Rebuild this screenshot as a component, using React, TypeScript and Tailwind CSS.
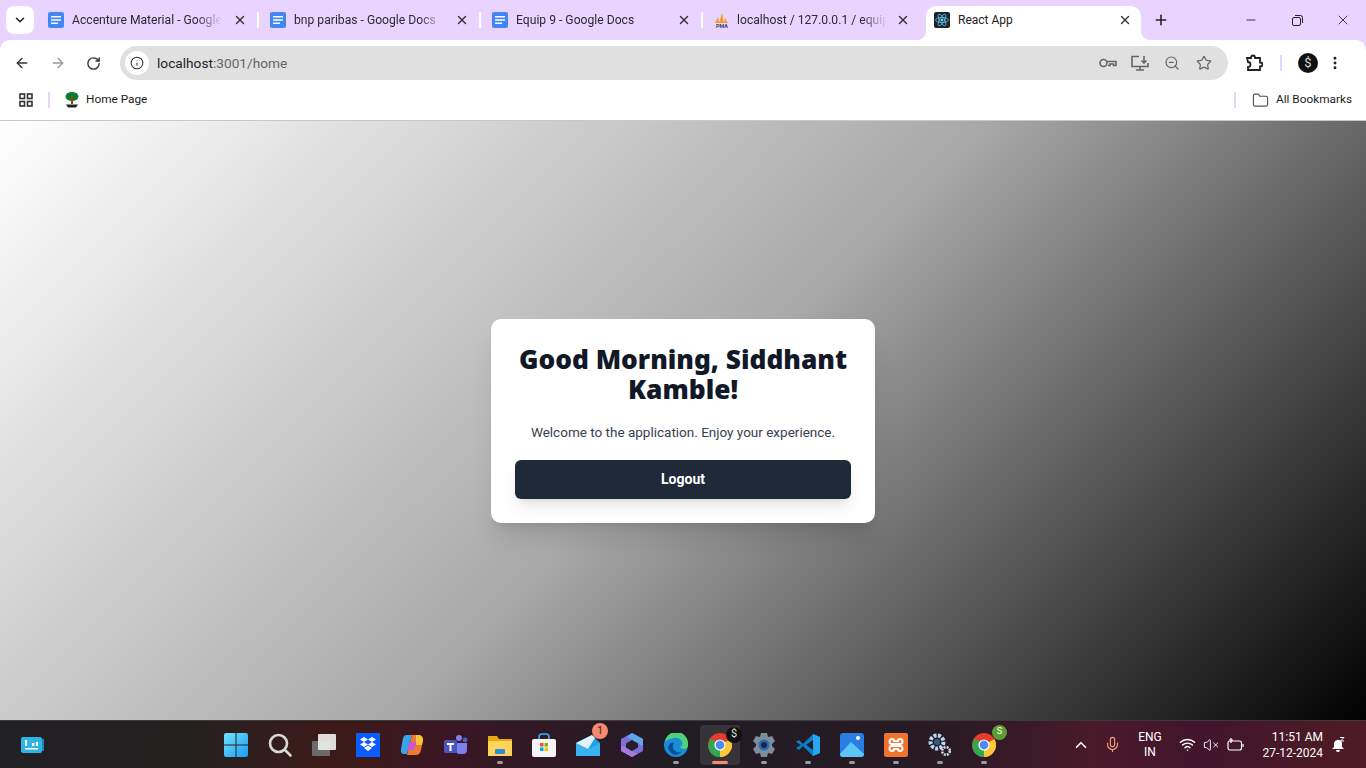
import React from "react";
import {
  ArrowLeft,
  ArrowRight,
  ChevronDown,
  ChevronUp,
  EllipsisVertical,
  Info,
  Mic,
  Minus,
  Plus,
  RotateCw,
  Star,
  VolumeX,
  Wifi,
  X,
  ZoomOut,
  Folder,
} from "lucide-react";

const font = "font-['Roboto',sans-serif]";

const DocIcon = () => (
  <svg width="16" height="16" viewBox="0 0 16 16" className="shrink-0">
    <rect width="16" height="16" rx="2" fill="#4285f4" />
    <path d="M3 4h10v1.6H3zM3 7.2h10v1.6H3zM3 10.4h7V12H3z" fill="#fff" />
  </svg>
);

const PmaIcon = () => (
  <svg width="16" height="16" viewBox="0 0 16 16" className="shrink-0">
    <path d="M1 11 4 5l1 6zM5 11 8 1l2 10zM10 11l1-5 3 5z" fill="#f59a23" />
    <text x="8" y="15.500" textAnchor="middle" fontSize="5.500" fontWeight="700" fontFamily="Roboto" fill="#39466e">PMA</text>
  </svg>
);

const ReactIcon = () => (
  <svg width="16" height="16" viewBox="0 0 16 16" className="shrink-0">
    <rect width="16" height="16" rx="2" fill="#20232a" />
    <circle cx="8" cy="8" r="1.400" fill="#61dafb" />
    <g fill="none" stroke="#61dafb" strokeWidth="0.700">
      <ellipse cx="8" cy="8" rx="6.400" ry="2.500" />
      <ellipse cx="8" cy="8" rx="6.400" ry="2.500" transform="rotate(60 8 8)" />
      <ellipse cx="8" cy="8" rx="6.400" ry="2.500" transform="rotate(120 8 8)" />
    </g>
  </svg>
);

const Tab = ({ icon, title, last }: { icon: React.ReactNode; title: string; last?: boolean }) => (
  <div className="relative flex h-[40px] w-[222px] shrink-0 items-center pl-[12px]">
    {icon}
    <span className={`${last ? "ml-[7px] w-[149px]" : "ml-[8px] w-[150px]"} overflow-hidden whitespace-nowrap text-[12.150px] text-[#2a2a30] [mask-image:linear-gradient(to_right,black_125px,transparent_150px)]`}>
      {title}
    </span>
    <X size={14} strokeWidth={2.400} className={`${last ? "ml-[10px]" : "ml-[11px]"} text-[#333]`} />
    {!last && <div className="absolute right-[-1px] top-[12px] h-[16px] w-[2px] bg-white" />}
  </div>
);

const TabStrip = () => (
  <div className={`flex h-[40px] items-center bg-[#e9d3ff] ${font}`}>
    <div className="ml-[6px] mr-[2px] flex h-[28px] w-[28px] shrink-0 items-center justify-center rounded-[8px] bg-white">
      <ChevronDown size={14} strokeWidth={2.600} className="text-[#222]" />
    </div>
    <Tab icon={<DocIcon />} title="Accenture Material - Google Docs" />
    <Tab icon={<DocIcon />} title="bnp paribas - Google Docs" />
    <Tab icon={<DocIcon />} title="Equip 9 - Google Docs" />
    <Tab icon={<PmaIcon />} title="localhost / 127.0.0.1 / equip9" last />
    <div className="relative ml-[2px] flex h-[34px] w-[215px] shrink-0 items-center self-end rounded-t-[10px] bg-white pb-[6px] pl-[8px] pr-[9px]">
      <div className="absolute bottom-0 left-[-10px] h-[10px] w-[10px] bg-[radial-gradient(circle_at_0_0,transparent_10px,white_10.500px)]" />
      <div className="absolute bottom-0 right-[-10px] h-[10px] w-[10px] bg-[radial-gradient(circle_at_100%_0,transparent_10px,white_10.500px)]" />
      <ReactIcon />
      <span className="ml-[8px] flex-1 whitespace-nowrap text-[12px] text-[#222]">React App</span>
      <X size={14} strokeWidth={2.400} className="text-[#333]" />
    </div>
    <Plus size={16} strokeWidth={2.400} className="ml-[12px] text-[#222]" />
    <div className="ml-auto flex items-center text-[#222]">
      <div className="flex w-[46px] justify-center"><Minus size={14} strokeWidth={1.500} /></div>
      <div className="flex w-[46px] justify-center">
        <svg width="11" height="11" viewBox="0 0 11 11" fill="none" stroke="currentColor">
          <rect x="0.500" y="2.500" width="8" height="8" rx="1.500" />
          <path d="M3 .5h5.500A2 2 0 0 1 10.500 2.500V8" />
        </svg>
      </div>
      <div className="flex w-[46px] justify-center"><X size={16} strokeWidth={1.300} /></div>
    </div>
  </div>
);

const Toolbar = () => (
  <div className={`flex h-[40px] items-start rounded-t-[10px] bg-white pt-[6px] ${font}`}>
    <div className="flex h-[34px] w-[120px] shrink-0 items-center pl-[14px]">
      <ArrowLeft size={16} strokeWidth={2} className="text-[#333]" />
      <ArrowRight size={16} strokeWidth={2} className="ml-[20px] text-[#9a9a9a]" />
      <RotateCw size={15} strokeWidth={2.200} className="ml-[20px] text-[#333]" />
    </div>
    <div className="flex h-[34px] w-[1108px] shrink-0 items-center rounded-full bg-[#e0e0e0] pl-[5px]">
      <div className="flex h-[24px] w-[24px] items-center justify-center rounded-full bg-white">
        <Info size={14} strokeWidth={1.800} className="text-[#333]" />
      </div>
      <span className="ml-[8px] text-[13.700px] text-[#222]">
        localhost<span className="text-[#666]">:3001/home</span>
      </span>
      <div className="ml-auto mr-[16px] flex items-center text-[#666]">
        <svg width="18" height="10" viewBox="0 0 18 10" fill="none" stroke="currentColor" strokeWidth="1.600">
          <circle cx="4.500" cy="5" r="3.500" />
          <path d="M8 3.500h9v4h-2.500V6H11v1.500H9" />
        </svg>
        <svg width="18" height="17" viewBox="0 0 18 17" fill="none" stroke="currentColor" strokeWidth="1.600" className="ml-[14px]">
          <path d="M8 1.500H1v10h16V8M5 15h8M9 11.500V15" />
          <path d="M13 1v7M10.500 5.500 13 8l2.500-2.500" />
        </svg>
        <ZoomOut size={16} strokeWidth={1.800} className="ml-[15px]" />
        <Star size={16} strokeWidth={1.800} className="ml-[16px]" />
      </div>
    </div>
    <div className="flex h-[34px] flex-1 items-center pl-[17px]">
      <svg width="18" height="18" viewBox="0 0 18 18" fill="none" stroke="#222" strokeWidth="1.800">
        <path d="M2 4h4Q6 1.500 8 1.500T10 4h5v4.500q2.500 0 2.500 2t-2.500 2V16H3v-3q2.500 0 2.500-2.500T3 8z" />
      </svg>
      <div className="ml-[17px] h-[16px] w-[2px] bg-[#e9d3ff]" />
      <div className="ml-[16px] flex h-[20px] w-[20px] items-center justify-center rounded-full bg-[#111] text-[13px] text-[#ddd]">$</div>
      <EllipsisVertical size={16} strokeWidth={2.400} className="ml-[9px] text-[#222]" />
    </div>
  </div>
);

const Bookmarks = () => (
  <div className={`flex h-[41px] items-center border-b border-b-[#c8c8c8] bg-white pl-[19px] pr-[14px] ${font}`}>
    <svg width="14" height="14" viewBox="0 0 14 14" fill="none" stroke="#333" strokeWidth="1.600">
      <rect x="1" y="1" width="4.500" height="4.500" />
      <rect x="8.500" y="1" width="4.500" height="4.500" />
      <rect x="1" y="8.500" width="4.500" height="4.500" />
      <rect x="8.500" y="8.500" width="4.500" height="4.500" />
    </svg>
    <div className="ml-[15px] h-[16px] w-[2px] bg-[#e9d3ff]" />
    <svg width="14" height="16" viewBox="0 0 14 16" className="ml-[15px]">
      <ellipse cx="7" cy="4.500" rx="6.500" ry="4.500" fill="#0d7a2d" />
      <path d="M6 4h2v8H6z" fill="#7a4a1a" />
      <path d="M1 12.500h12L11 15.500H3z" fill="#222" />
    </svg>
    <span className="ml-[7px] text-[11.800px] text-[#222]">Home Page</span>
    <div className="ml-auto h-[16px] w-[2px] bg-[#e9d3ff]" />
    <Folder size={17} strokeWidth={1.600} className="ml-[16px] text-[#555]" />
    <span className="ml-[7px] text-[11.800px] text-[#222]">All Bookmarks</span>
  </div>
);

const Card = () => (
  <div className={`w-[384px] rounded-[10px] bg-white px-6 pb-6 pt-[25px] text-center shadow-xl ${font}`}>
    <h1 className="font-['Noto_Sans',sans-serif] text-[26.300px] font-black leading-[30px] text-[#111827]">Good Morning, Siddhant Kamble!</h1>
    <p className="mt-[17px] text-[13.500px] leading-[22px] text-[#374151]">Welcome to the application. Enjoy your experience.</p>
    <button className="mt-[17px] h-[39px] w-full rounded-[6px] bg-[#1f2937] pt-[1px] text-[14px] font-bold text-white shadow-lg">Logout</button>
  </div>
);

const Slot = ({ children, dot, active }: { children: React.ReactNode; dot?: boolean; active?: boolean }) => (
  <div className={`relative flex h-[40px] w-[40px] items-center justify-center rounded-[4px] ${active ? "bg-white/10" : ""}`}>
    {children}
    {dot && <div className={`absolute bottom-[1px] h-[3px] rounded-full ${active ? "w-[16px] bg-[#f58a70]" : "w-[6px] bg-[#9a9a9a]"}`} />}
  </div>
);

const ChromeIcon = () => (
  <svg width="24" height="24" viewBox="0 0 24 24">
    <circle cx="12" cy="12" r="12" fill="#e33b2e" />
    <path d="M12 12 1.600 18A12 12 0 0 1 3 5.500z" fill="#2da94f" />
    <path d="M12 12 22.400 6A12 12 0 0 1 12 24z" fill="#fcc934" />
    <path d="M12 12 12 24A12 12 0 0 1 1.600 18z" fill="#2da94f" />
    <circle cx="12" cy="12" r="5.600" fill="#fff" />
    <circle cx="12" cy="12" r="4.400" fill="#4a8bf5" />
  </svg>
);

const Taskbar = () => (
  <div className={`flex h-[48px] items-center border-t border-t-[#3a3a3e] bg-[linear-gradient(to_right,#212024_0%,#25201f_15%,#3d1a18_24%,#3a1624_33%,#201c24_50%,#2a1a24_70%,#4a1a2a_80%,#42152e_88%,#4e1c22_100%)] pl-[20px] ${font}`}>
    <svg width="24" height="18" viewBox="0 0 24 18" className="shrink-0">
      <rect x="1" y="1" width="21" height="16" rx="2" fill="#2eb4e6" />
      <path d="M22 3h2v12h-2z" fill="#1b87b8" />
      <path d="M5 4h2v6H5zM12 7h2.500v3H12zM16 6h2v4h-2zM5 12h13v1.600H5z" fill="#fff" />
    </svg>
    <div className="ml-[170px] flex w-[792px] shrink-0 justify-center gap-[4px]">
      <Slot>
        <svg width="24" height="24" viewBox="0 0 24 24">
          <defs>
            <linearGradient id="win" x1="0" y1="0" x2="1" y2="1">
              <stop offset="0" stopColor="#6fe3fb" />
              <stop offset="1" stopColor="#1a9cf5" />
            </linearGradient>
          </defs>
          <path d="M0 2a2 2 0 0 1 2-2h9.500v11.500H0zM12.500 0H22a2 2 0 0 1 2 2v9.500H12.500zM0 12.500h11.500V24H2a2 2 0 0 1-2-2zM12.500 12.500H24V22a2 2 0 0 1-2 2h-9.500z" fill="url(#win)" />
        </svg>
      </Slot>
      <Slot>
        <svg width="24" height="24" viewBox="0 0 24 24" fill="none" stroke="#d8d8d8" strokeWidth="2.600" strokeLinecap="round">
          <circle cx="10.500" cy="10.500" r="8.500" />
          <path d="m17 17 5.500 5.500" />
        </svg>
      </Slot>
      <Slot>
        <svg width="24" height="22" viewBox="0 0 24 22">
          <rect y="7" width="18" height="15" rx="1" fill="#6b6b6b" />
          <rect x="6" width="18" height="16" rx="1" fill="#ededed" opacity="0.920" />
        </svg>
      </Slot>
      <Slot>
        <div className="flex h-[24px] w-[24px] items-center justify-center bg-[#0b5cff]">
          <svg width="16" height="15" viewBox="0 0 16 15" fill="#fff">
            <path d="M4 0 8 2.500 4 5 0 2.500zM12 0l4 2.500L12 5 8 2.500zM4 5l4 2.500L4 10 0 7.500zM12 5l4 2.500-4 2.500-4-2.500zM4 11l4-2.500 4 2.500-4 3z" />
          </svg>
        </div>
      </Slot>
      <Slot>
        <svg width="24" height="22" viewBox="0 0 24 22">
          <path d="M6 1h6L7 20H4Q0 20 1 15l2-11q1-3 3-3z" fill="#38a5e8" />
          <path d="M12 1h6q5 0 5 5l-2 10q-1 5-5 5H7z" fill="#f0782f" />
          <path d="M9 8h8l-3 8H7z" fill="#c65bd0" />
          <path d="M16 1h2q5 0 5 5l-1 5h-6z" fill="#f5c33b" />
        </svg>
      </Slot>
      <Slot>
        <svg width="24" height="22" viewBox="0 0 24 22">
          <circle cx="15" cy="4" r="3" fill="#7b83eb" />
          <circle cx="21" cy="6" r="2.400" fill="#5059c9" />
          <path d="M12 9h11v7a4 4 0 0 1-4 4h-3a4 4 0 0 1-4-4z" fill="#7b83eb" />
          <rect y="6" width="13" height="13" rx="1.500" fill="#4b53bc" />
          <path d="M3 9h7v2H7.500v6h-2v-6H3z" fill="#fff" />
        </svg>
      </Slot>
      <Slot dot>
        <svg width="24" height="22" viewBox="0 0 24 22">
          <path d="M0 2h9l2 3h13v4H0z" fill="#e8a90e" />
          <path d="M0 7h24v15H0z" fill="#fcd55a" />
          <rect x="7" y="15" width="10" height="5" rx="1" fill="#2b8ed8" />
        </svg>
      </Slot>
      <Slot>
        <svg width="24" height="24" viewBox="0 0 24 24">
          <path d="M7 7V4a3 3 0 0 1 3-3h4a3 3 0 0 1 3 3v3" fill="none" stroke="#29b6f6" strokeWidth="1.600" />
          <rect y="6" width="24" height="18" rx="2" fill="#f5f5f5" />
          <path d="M8 10h3.500v3.500H8z" fill="#f25022" />
          <path d="M12.500 10H16v3.500h-3.500z" fill="#7fba00" />
          <path d="M8 14.500h3.500V18H8z" fill="#00a4ef" />
          <path d="M12.500 14.500H16V18h-3.500z" fill="#ffb900" />
        </svg>
      </Slot>
      <Slot>
        <svg width="24" height="22" viewBox="0 0 24 22">
          <path d="M0 9 16 1l8 8v13H0z" fill="#1e9fe8" />
          <path d="M0 9l12 6 12-6v13H0z" fill="#38b3f0" />
          <path d="M0 9 16 1l3 3-7 11z" fill="#dff3fd" />
        </svg>
        <div className="absolute right-[0px] top-[-2px] flex h-[16px] w-[16px] items-center justify-center rounded-full bg-[#f58a70] text-[10px] text-[#222]">1</div>
      </Slot>
      <Slot>
        <svg width="22" height="24" viewBox="0 0 22 24">
          <path d="M11 0 22 6v12L11 24 0 18V6z" fill="#7c6fd8" />
          <path d="M11 0 22 6v7L6 4z" fill="#5da8e8" />
          <path d="M0 12l16 9-5 3-11-6z" fill="#a679dc" />
          <path d="M11 7l6 3.500v4L11 18l-6-3.500v-4z" fill="#231e28" />
        </svg>
      </Slot>
      <Slot dot>
        <svg width="24" height="24" viewBox="0 0 24 24">
          <circle cx="12" cy="12" r="12" fill="#1b8dd8" />
          <path d="M1 9A11.500 11.500 0 0 1 24 12q0 4-4 4-3 0-4-2 3-1 2-5-2-5-8-4-7 1-9 4z" fill="#4fd07a" />
          <path d="M10 10q-3 4 1 8 3 2 7 1-3 3-7 3-6-2-7-8 2-5 6-4z" fill="#0b4f96" />
        </svg>
      </Slot>
      <Slot dot active>
        <ChromeIcon />
        <div className="absolute right-[-2px] top-[2px] flex h-[16px] w-[16px] items-center justify-center rounded-full bg-[#111] text-[11px] text-[#ddd]">$</div>
      </Slot>
      <Slot dot>
        <svg width="24" height="24" viewBox="0 0 24 24">
          <path d="M9 0h6l1 4 4-1 3 5-3 3v2l3 3-3 5-4-1-1 4H9l-1-4-4 1-3-5 3-3v-2L1 8l3-5 4 1z" fill="#7f8c99" />
          <circle cx="12" cy="12" r="5.500" fill="#1a6fc0" />
          <circle cx="12" cy="12" r="3" fill="#2a2430" />
        </svg>
      </Slot>
      <Slot dot>
        <svg width="24" height="24" viewBox="0 0 24 24">
          <path d="M17 1 7 11 3 7 0 9l5 3-5 3 3 2 4-4 10 10 7-3V4z" fill="#0a7fd0" />
          <path d="M17 7v10l-7-5z" fill="#231e28" />
          <path d="M17 1l7 3v16l-7 3z" fill="#28a5ee" />
        </svg>
      </Slot>
      <Slot dot>
        <svg width="24" height="24" viewBox="0 0 24 24">
          <rect width="24" height="24" rx="3" fill="#2a7de1" />
          <path d="M0 21 11 9l13 12v0a3 3 0 0 1-3 3H3a3 3 0 0 1-3-3z" fill="#5cc5f5" />
          <circle cx="18" cy="5" r="2" fill="#fff" />
        </svg>
      </Slot>
      <Slot dot>
        <div className="flex h-[24px] w-[24px] items-center justify-center rounded-[2px] bg-[#f0742f]">
          <svg width="16" height="16" viewBox="0 0 16 16" fill="none" stroke="#fff" strokeWidth="2">
            <path d="M4 2a2.500 2.500 0 0 0 0 5h8a2.500 2.500 0 0 0 0-5q-2 0-2 2H6q0-2-2-2zM4 14a2.500 2.500 0 0 1 0-5h8a2.500 2.500 0 0 1 0 5q-2 0-2-2H6q0 2-2 2z" />
          </svg>
        </div>
      </Slot>
      <Slot dot>
        <svg width="24" height="24" viewBox="0 0 24 24">
          <circle cx="9" cy="9" r="6.500" fill="none" stroke="#b9d8f0" strokeWidth="4" strokeDasharray="3 1.400" />
          <circle cx="9" cy="9" r="3" fill="#2b5c8a" />
          <circle cx="18" cy="18" r="3.800" fill="none" stroke="#c8d8e4" strokeWidth="2.600" strokeDasharray="2 1" />
        </svg>
      </Slot>
      <Slot dot>
        <ChromeIcon />
        <div className="absolute right-[-3px] top-[0px] flex h-[15px] w-[15px] items-center justify-center rounded-full bg-[#5f9e35] text-[9px] text-white">S</div>
      </Slot>
    </div>
    <div className="ml-auto flex items-center text-white">
      <ChevronUp size={18} strokeWidth={2.200} />
      <Mic size={17} strokeWidth={1.600} className="ml-[14px] text-[#f0a07a]" />
      <div className="ml-[14px] w-[30px] text-center text-[12px] leading-[15px]">ENG<br />IN</div>
      <Wifi size={17} strokeWidth={2} className="ml-[14px]" />
      <VolumeX size={16} strokeWidth={1.400} className="ml-[7px]" />
      <svg width="18" height="14" viewBox="0 0 18 14" fill="none" stroke="#fff" strokeWidth="1.200" className="ml-[8px]">
        <rect x="1" y="3" width="13.500" height="9" rx="2" />
        <path d="M16 6v3M4 0v5M2 2h4" />
      </svg>
      <div className="ml-[12px] w-[66px] text-right text-[12px] leading-[16px]">11:51 AM<br />27-12-2024</div>
      <svg width="14" height="16" viewBox="0 0 14 16" fill="#fff" className="ml-[8px] mr-[21px]">
        <path d="M6 3a4 4 0 0 1 5 3v4l2 2H1l2-2V6a4 4 0 0 1 3-3zM5 13h4a2 2 0 0 1-4 0z" />
        <path d="M9 .5h4L9.500 4H13" fill="none" stroke="#fff" />
      </svg>
    </div>
  </div>
);

export default function App() {
  return (
    <div className="flex h-screen flex-col overflow-hidden bg-[#e9d3ff]">
      <TabStrip />
      <Toolbar />
      <Bookmarks />
      <main className="flex flex-1 items-center justify-center bg-[linear-gradient(135deg,#ffffff_0%,#a9a9a9_50%,#000000_100%)]">
        <Card />
      </main>
      <Taskbar />
    </div>
  );
}
